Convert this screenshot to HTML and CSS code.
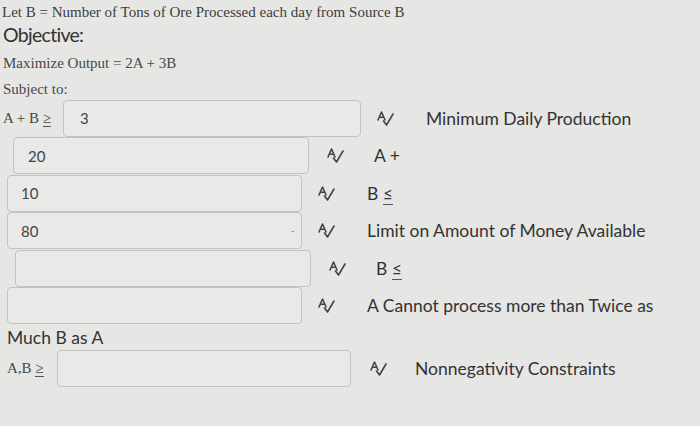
FILE: index.html
```html
<!DOCTYPE html>
<html>
<head>
<meta charset="utf-8">
<link rel="stylesheet" href="styles.css">
</head>
<body>
<div class="page">
  <p class="def">Let B = Number of Tons of Ore Processed each day from Source B</p>
  <h2 class="heading">Objective:</h2>
  <p class="serif obj">Maximize Output = 2A + 3B</p>
  <p class="serif subj">Subject to:</p>

  <div class="row r1">
    <span class="serif label l1">A + B <u class="ge">≥</u></span>
    <div class="box w1"><span class="val">3</span></div>
    <svg class="icon i1" viewBox="0 0 17 15"><path d="M1 9 L4.5 1 L8 9 M2.3 6.3 H6.7 M6.5 10 L9.5 14 L16 3" fill="none" stroke="#444" stroke-width="1.6" stroke-linecap="round" stroke-linejoin="round"/></svg>
    <span class="note n1">Minimum Daily Production</span>
  </div>

  <div class="row r2">
    <div class="box w2"><span class="val">20</span></div>
    <svg class="icon i2" viewBox="0 0 17 15"><path d="M1 9 L4.5 1 L8 9 M2.3 6.3 H6.7 M6.5 10 L9.5 14 L16 3" fill="none" stroke="#444" stroke-width="1.6" stroke-linecap="round" stroke-linejoin="round"/></svg>
    <span class="note n2">A +</span>
  </div>

  <div class="row r3">
    <div class="box w3"><span class="val">10</span></div>
    <svg class="icon i3" viewBox="0 0 17 15"><path d="M1 9 L4.5 1 L8 9 M2.3 6.3 H6.7 M6.5 10 L9.5 14 L16 3" fill="none" stroke="#444" stroke-width="1.6" stroke-linecap="round" stroke-linejoin="round"/></svg>
    <span class="note n3">B <u class="le">≤</u></span>
  </div>

  <div class="row r3">
    <div class="box w3"><span class="val">80</span><span class="dash">-</span></div>
    <svg class="icon i3" viewBox="0 0 17 15"><path d="M1 9 L4.5 1 L8 9 M2.3 6.3 H6.7 M6.5 10 L9.5 14 L16 3" fill="none" stroke="#444" stroke-width="1.6" stroke-linecap="round" stroke-linejoin="round"/></svg>
    <span class="note n3">Limit on Amount of Money Available</span>
  </div>

  <div class="row r5">
    <div class="box w2"></div>
    <svg class="icon i2" viewBox="0 0 17 15"><path d="M1 9 L4.5 1 L8 9 M2.3 6.3 H6.7 M6.5 10 L9.5 14 L16 3" fill="none" stroke="#444" stroke-width="1.6" stroke-linecap="round" stroke-linejoin="round"/></svg>
    <span class="note n2">B <u class="le">≤</u></span>
  </div>

  <div class="row r3">
    <div class="box w3"></div>
    <svg class="icon i3" viewBox="0 0 17 15"><path d="M1 9 L4.5 1 L8 9 M2.3 6.3 H6.7 M6.5 10 L9.5 14 L16 3" fill="none" stroke="#444" stroke-width="1.6" stroke-linecap="round" stroke-linejoin="round"/></svg>
    <span class="note n3">A Cannot process more than Twice as</span>
  </div>

  <p class="much">Much B as A</p>

  <div class="row r7">
    <span class="serif label l7">A,B <u class="ge">≥</u></span>
    <div class="box w7"></div>
    <svg class="icon i7" viewBox="0 0 17 15"><path d="M1 9 L4.5 1 L8 9 M2.3 6.3 H6.7 M6.5 10 L9.5 14 L16 3" fill="none" stroke="#444" stroke-width="1.6" stroke-linecap="round" stroke-linejoin="round"/></svg>
    <span class="note n7">Nonnegativity Constraints</span>
  </div>
</div>
</body>
</html>
```

FILE: styles.css
```css
html, body {
  margin: 0;
  padding: 0;
  background: #e6e6e4;
}
.page {
  width: 700px;
  height: 426px;
  overflow: hidden;
  color: #333;
  font-family: Lato, "Open Sans", sans-serif;
}
p, h2 { margin: 0; }
.def {
  font-family: "Liberation Serif", serif;
  font-size: 15px;
  line-height: 18px;
  padding: 3px 0 0 2px;
  color: #3d3d3d;
}
.heading {
  font-weight: 400;
  font-size: 19.5px;
  letter-spacing: -0.7px;
  line-height: 24px;
  padding: 2px 0 0 3px;
  color: #333;
}
.serif {
  font-family: "Liberation Serif", serif;
  font-size: 15px;
  color: #484848;
}
.obj { line-height: 18px; padding: 7px 0 0 3px; }
.subj { line-height: 18px; padding: 8px 0 0 3px; }
.ge, .le { text-decoration: none; border-bottom: 1px solid #555; line-height: 1; }
.row {
  display: flex;
  align-items: center;
  height: 37.5px;
}
.r1 { margin-top: 1px; padding-left: 3px; height: 38px; }
.r2 { padding-left: 13px; }
.r3 { padding-left: 7px; }
.r5 { padding-left: 15px; }
.r7 { padding-left: 7px; height: 37px; margin-top: 1px; }
.label { width: 60px; flex: none; }
.l7 { width: 50px; }
.box {
  box-sizing: border-box;
  height: 37px;
  border: 1.5px solid #c2c2c0;
  border-radius: 4px;
  background: #e9e9e7;
  display: flex;
  align-items: center;
  padding-left: 14px;
  font-size: 15px;
  color: #444;
  flex: none;
}
.w1 { width: 298px; padding-left: 16px; }
.w2 { width: 296px; }
.w3 { width: 295px; padding-left: 13px; }
.w7 { width: 294px; }
.val { flex: 1; }
.dash { color: #999; padding-right: 6px; font-size: 12px; }
.icon { width: 17px; height: 15px; flex: none; }
.i1 { margin-left: 16px; }
.i2 { margin-left: 18px; }
.i3 { margin-left: 16px; }
.i7 { margin-left: 19px; }
.note { font-size: 17.5px; color: #333; }
.n1 { margin-left: 32px; }
.n2 { margin-left: 30px; }
.n3 { margin-left: 32px; }
.n7 { margin-left: 28px; }
.much {
  font-size: 17.5px;
  line-height: 22px;
  padding: 2px 0 0 7px;
}
```
